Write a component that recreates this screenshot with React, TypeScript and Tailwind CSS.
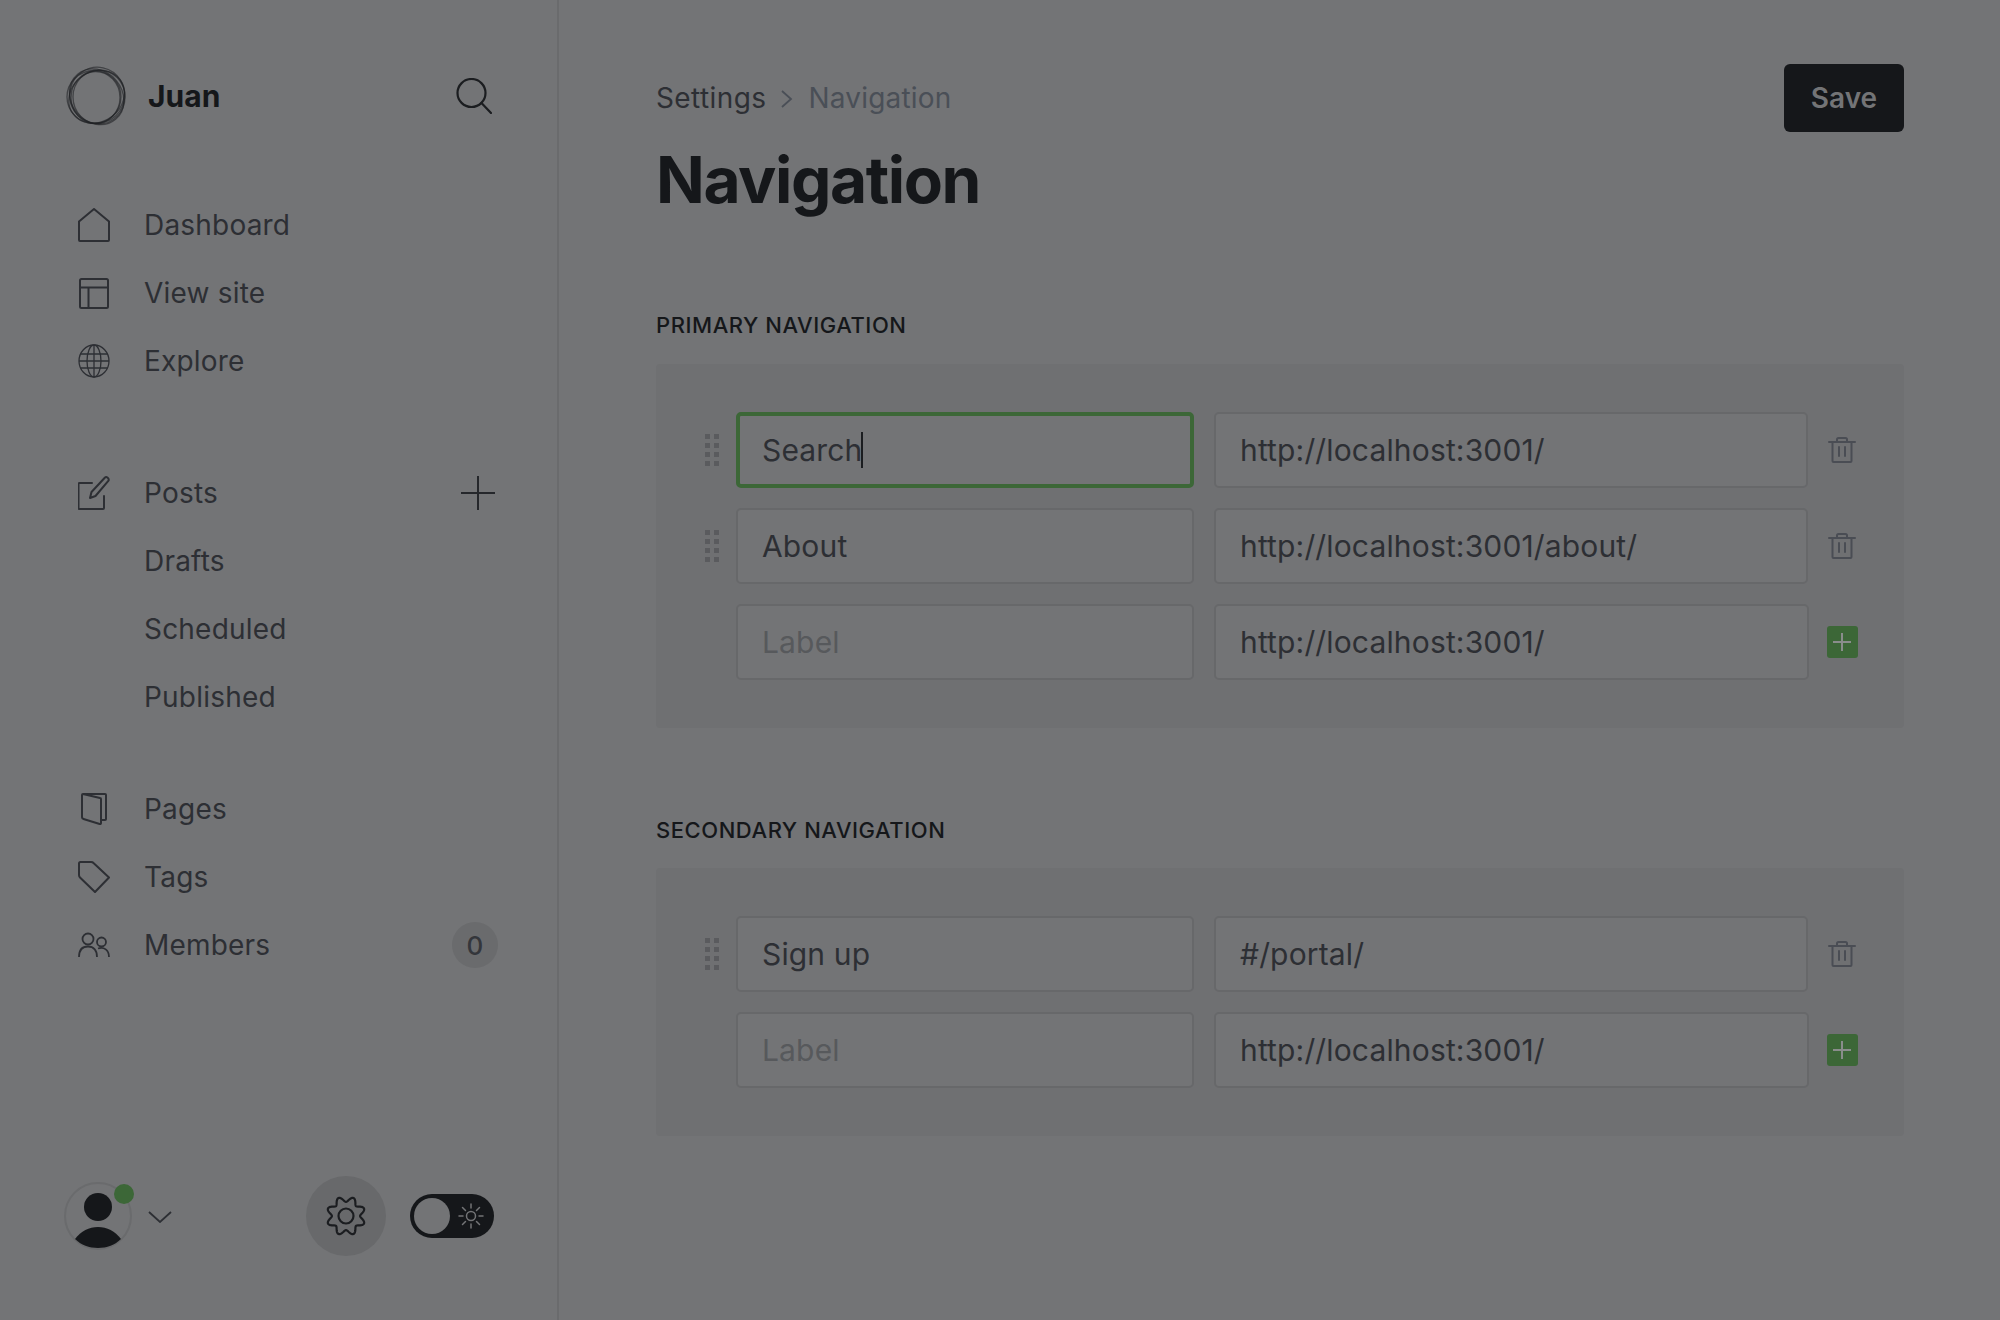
import React from "react";

const ic = "shrink-0 fill-none stroke-[#2d2f34]";

const gearPath = (() => {
  const pts: string[] = [];
  for (let i = 0; i < 240; i++) {
    const t = (i / 240) * Math.PI * 2;
    const r = 16.8 + 2.7 * Math.cos(8 * t + Math.PI);
    const x = 20 + r * Math.sin(t);
    const y = 20 - r * Math.cos(t);
    pts.push(`${i === 0 ? "M" : "L"}${x.toFixed(2)} ${y.toFixed(2)}`);
  }
  return pts.join(" ") + " Z";
})();

const Home = () => (
  <svg width="32" height="34" viewBox="0 0 32 34" className={ic} strokeWidth="2" strokeLinejoin="round"><path d="M1 32V13.500L16 1l15 12.500V32a1 1 0 0 1-1 1H2a1 1 0 0 1-1-1z" /></svg>
);
const Layout = () => (
  <svg width="30" height="31" viewBox="0 0 30 31" className={`${ic} ml-[1px]`} strokeWidth="2"><rect x="1" y="1" width="28" height="29" rx="1.500" /><path d="M1 9.500h28M9.500 9.500V30" /></svg>
);
const Globe = () => (
  <svg width="32" height="34" viewBox="0 0 32 34" className={ic} strokeWidth="1.300"><ellipse cx="16" cy="17" rx="15" ry="16" /><ellipse cx="16" cy="17" rx="7" ry="16" /><path d="M2.500 10h27M1 17h30M2.500 24h27M16 1v32" /></svg>
);
const Pen = () => (
  <svg width="32" height="34" viewBox="0 0 32 34" className={ic} strokeWidth="2" strokeLinejoin="round" strokeLinecap="round"><path d="M14 7H1.500a1 1 0 0 0-1 1v24a1 1 0 0 0 1 1H25a1 1 0 0 0 1-1V20" /><path d="M12 22l1.500-6L27 1.500c1.500-1.200 4.500 1 3.500 3.200L17.500 20z" /></svg>
);
const Pages = () => (
  <svg width="26" height="32" viewBox="0 0 26 32" className={`${ic} ml-[3px]`} strokeWidth="2" strokeLinejoin="round"><path d="M2 1h22a1 1 0 0 1 1 1v24a1 1 0 0 1-1 1h-4" /><path d="M2 1l17 4a1 1 0 0 1 1 1v24c0 .8-.6 1.300-1.300 1L2.500 26A2 2 0 0 1 1 24V2a1 1 0 0 1 1-1z" /></svg>
);
const Tag = () => (
  <svg width="32" height="32" viewBox="0 0 32 32" className={ic} strokeWidth="2" strokeLinejoin="round"><path d="M1 2.500A1.500 1.500 0 0 1 2.500 1H13c1 0 2 .4 2.500 1L31 16.500 17 31 2 16.500C1.300 15.800 1 15 1 14z" /></svg>
);
const Members = () => (
  <svg width="32" height="26" viewBox="0 0 32 26" className={ic} strokeWidth="1.800"><circle cx="10" cy="7" r="5.500" /><path d="M1 25c0-7 3.500-10.500 9-10.500S19 18 19 25" /><circle cx="23.500" cy="10" r="4.500" /><path d="M20 16.500c6-2 11 1.500 11 8.500" /></svg>
);
const Search = () => (
  <svg width="36" height="36" viewBox="0 0 36 36" className="fill-none stroke-[#1b1d20]" strokeWidth="2.200" strokeLinecap="round"><circle cx="15.500" cy="15" r="14" /><path d="M25.500 25L35 35" /></svg>
);
const Plus = () => (
  <svg width="34" height="34" viewBox="0 0 34 34" className="fill-none stroke-[#25272b]" strokeWidth="2"><path d="M17 0v34M0 17h34" /></svg>
);
const Trash = () => (
  <svg width="28" height="26" viewBox="0 0 28 26" className="fill-none stroke-[#4a4d54]" strokeWidth="2" strokeLinecap="round" strokeLinejoin="round"><path d="M1 5h26M4.500 5v19a1 1 0 0 0 1 1h17a1 1 0 0 0 1-1V5M9 5V2.500A1.500 1.500 0 0 1 10.500 1h7A1.500 1.500 0 0 1 19 2.500V5M11 10v9M17 10v9" /></svg>
);
const Handle = () => (
  <div className="grid grid-cols-[5px_5px] gap-x-[4px] gap-y-[4px] shrink-0 w-[14px]">
    {[0, 1, 2, 3, 4, 5, 6, 7].map((i) => (
      <span key={i} className="block w-[5px] h-[5px] bg-[#5a5b5e]" />
    ))}
  </div>
);
const Logo = () => (
  <svg width="60" height="60" viewBox="0 0 60 60" className="shrink-0 fill-none stroke-[#1f2124]">
    <g strokeOpacity="0.6" strokeWidth="1.300">
      <ellipse cx="28" cy="31" rx="27" ry="26.500" />
      <ellipse cx="30" cy="31" rx="29" ry="25" transform="rotate(-35 30 30)" />
      <ellipse cx="31" cy="30" rx="29.500" ry="25.500" transform="rotate(50 30 30)" />
      <ellipse cx="33" cy="31" rx="26" ry="27" />
      <ellipse cx="29.500" cy="31.500" rx="24.500" ry="26" />
      <ellipse cx="31" cy="29" rx="27.500" ry="28" transform="rotate(12 30 30)" />
    </g>
  </svg>
);
const Sun = () => (
  <svg width="26" height="26" viewBox="0 0 26 26" className="fill-none stroke-[#737476]" strokeWidth="1.500" strokeLinecap="round"><circle cx="13" cy="13" r="4.500" /><path d="M13 1v4M13 21v4M1 13h4M21 13h4M4.500 4.500l3 3M18.500 18.500l3 3M4.500 21.500l3-3M18.500 7.500l3-3" /></svg>
);

const Row = ({ icon, label, right }: { icon?: React.ReactNode; label: string; right?: React.ReactNode }) => (
  <div className="h-[68px] flex items-center">
    <div className="w-[80px] pl-[14px] flex items-center justify-start shrink-0">{icon}</div>
    <span className="text-[28px] text-[#2d2f34] tracking-[0.200px]">{label}</span>
    {right && <div className="ml-auto flex items-center">{right}</div>}
  </div>
);

const Field = ({ w, value, placeholder, focus, caret }: { w: string; value?: string; placeholder?: string; focus?: boolean; caret?: boolean }) => (
  <div className={`${w} h-[76px] shrink-0 rounded-[5px] flex items-center text-[30px] tracking-[0.150px] ${focus ? "border-[4px] border-[#3c6737] pl-[22px]" : "border-[2px] border-[#67686a] pl-[24px]"} bg-[#737476]`}>
    {placeholder ? (
      <span className="text-[#57595c]">{placeholder}</span>
    ) : (
      <span className="text-[#2d2f34]">{value}</span>
    )}
    {caret && <span className="w-[2px] h-[36px] bg-[#1b1d20] -ml-[1px]" />}
  </div>
);

const Action = ({ add }: { add?: boolean }) => (
  <div className={`w-[32px] flex justify-center shrink-0 ${add ? "ml-[17px]" : "ml-[18px]"}`}>
    {add ? (
      <div className="w-[31px] h-[32px] rounded-[3px] bg-[#3c6737] flex items-center justify-center">
        <svg width="18" height="18" viewBox="0 0 18 18" className="fill-none stroke-[#8a8d8c]" strokeWidth="2"><path d="M9 0v18M0 9h18" /></svg>
      </div>
    ) : (
      <Trash />
    )}
  </div>
);

const NavRow = ({ label, url, placeholder, focus, add }: { label?: string; url: string; placeholder?: string; focus?: boolean; add?: boolean }) => (
  <div className="flex items-center">
    <div className="w-[80px] pl-[49px] shrink-0">{!add && <Handle />}</div>
    <Field w="w-[458px]" value={label} placeholder={placeholder} focus={focus} caret={focus} />
    <div className="w-[20px] shrink-0" />
    <Field w={add ? "w-[595px]" : "w-[594px]"} value={url} />
    <Action add={add} />
  </div>
);

export default function App() {
  return (
    <div className="w-[2000px] h-[1320px] flex bg-[#737476] overflow-hidden" style={{ fontFamily: "Inter, 'Liberation Sans', sans-serif" }}>
      <aside className="w-[559px] h-full shrink-0 border-r-[2px] border-[#6a6b6d] pl-[64px] pr-[59px] pt-[66px] flex flex-col">
        <div className="flex items-center h-[60px]">
          <div className="ml-[2px] flex"><Logo /></div>
          <span className="ml-[22px] text-[30px] font-bold text-[#15171a]">Juan</span>
          <div className="ml-auto mr-[6px] flex"><Search /></div>
        </div>
        <div className="mt-[65px]">
          <Row icon={<Home />} label="Dashboard" />
          <Row icon={<Layout />} label="View site" />
          <Row icon={<Globe />} label="Explore" />
        </div>
        <div className="mt-[64px]">
          <Row icon={<Pen />} label="Posts" right={<div className="mr-[3px] flex"><Plus /></div>} />
          <Row label="Drafts" />
          <Row label="Scheduled" />
          <Row label="Published" />
        </div>
        <div className="mt-[44px]">
          <Row icon={<Pages />} label="Pages" />
          <Row icon={<Tag />} label="Tags" />
          <Row
            icon={<Members />}
            label="Members"
            right={<div className="w-[46px] h-[46px] rounded-full bg-[#6a6b6d] flex items-center justify-center text-[26px] font-medium text-[#34363b]">0</div>}
          />
        </div>
        <div className="mt-auto mb-[64px] flex items-center h-[80px]">
          <div className="relative w-[68px] h-[68px] rounded-full border-[2px] border-[#6a6b6d] overflow-visible shrink-0">
            <svg width="64" height="64" viewBox="0 0 64 64" className="fill-[#15171a]"><circle cx="32" cy="23" r="14" /><path d="M9 55c6-8 14-12 23-12s17 4 23 12c-6 6-14 9-23 9S15 61 9 55z" /></svg>
            <span className="absolute right-[-4px] top-[0px] w-[20px] h-[20px] rounded-full bg-[#3c6737]" />
          </div>
          <svg width="24" height="12" viewBox="0 0 24 12" className="ml-[16px] mt-[2px] fill-none stroke-[#2d2f34]" strokeWidth="1.800"><path d="M1 1l11 10L23 1" /></svg>
          <div className="ml-[134px] w-[80px] h-[80px] rounded-full bg-[#68696b] flex items-center justify-center">
            <svg width="40" height="40" viewBox="0 0 40 40" className="fill-none stroke-[#1b1d20]" strokeWidth="2.200" strokeLinejoin="round"><path d={gearPath} /><circle cx="20" cy="20" r="7.500" /></svg>
          </div>
          <div className="ml-[24px] w-[84px] h-[44px] rounded-full bg-[#15171a] flex items-center pl-[4px]">
            <span className="w-[36px] h-[36px] rounded-full bg-[#737476]" />
            <span className="ml-[8px] flex"><Sun /></span>
          </div>
        </div>
      </aside>

      <main className="flex-1 pl-[97px] pr-[96px] pt-[64px]">
        <div className="flex items-start justify-between">
          <div className="flex items-center h-[68px] text-[28px]">
            <span className="text-[#2d2f34] tracking-[0.400px]">Settings</span>
            <svg width="12" height="18" viewBox="0 0 12 18" className="mx-[15px] mt-[2px] fill-none stroke-[#4a4f57]" strokeWidth="1.800"><path d="M1 1l9 8-9 8" /></svg>
            <span className="text-[#4a4f57] tracking-[0.200px]">Navigation</span>
          </div>
          <div className="w-[120px] h-[68px] rounded-[6px] bg-[#15171a] flex items-center justify-center text-[28px] font-semibold text-[#737476]">Save</div>
        </div>
        <h1 className="mt-[10px] text-[64px] leading-[76px] font-bold tracking-[-1.400px] text-[#15171a]">Navigation</h1>

        <h2 className="mt-[93px] text-[22px] leading-[28px] font-medium tracking-[0.550px] text-[#15171a] uppercase">Primary navigation</h2>
        <section className="mt-[25px] bg-[#6f7072] rounded-[4px] py-[48px] flex flex-col gap-[20px]">
          <NavRow label="Search" url="http://localhost:3001/" focus />
          <NavRow label="About" url="http://localhost:3001/about/" />
          <NavRow placeholder="Label" url="http://localhost:3001/" add />
        </section>

        <h2 className="mt-[88px] text-[22px] leading-[28px] font-medium tracking-[0.550px] text-[#15171a] uppercase">Secondary navigation</h2>
        <section className="mt-[24px] bg-[#6f7072] rounded-[4px] py-[48px] flex flex-col gap-[20px]">
          <NavRow label="Sign up" url="#/portal/" />
          <NavRow placeholder="Label" url="http://localhost:3001/" add />
        </section>
      </main>
    </div>
  );
}
